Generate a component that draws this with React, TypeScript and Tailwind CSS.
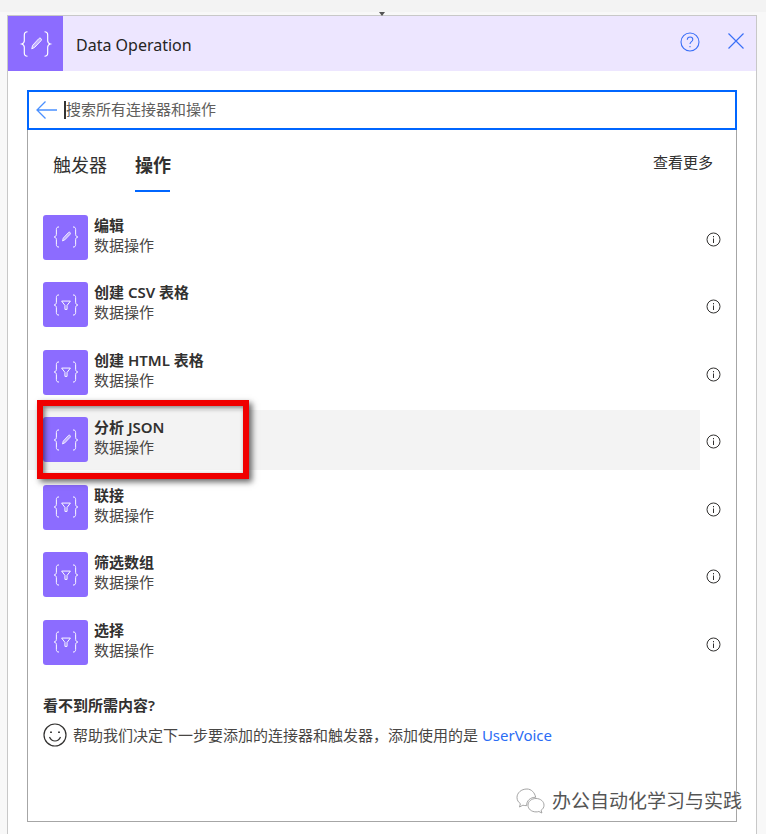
import React from 'react';

const font = "font-['Noto_Sans','Noto_Sans_CJK_SC',sans-serif]";

const Braces = ({ kind, size }: { kind: 'edit' | 'filter'; size: number }) => (
  <svg width={size} height={size} viewBox="0 0 32 32" fill="none" stroke="white" strokeWidth="1.100">
    <path d="M8 4.500c-2.200 0-3 1-3 3v5.500c0 1.500-.8 2.500-2.500 3 1.700.5 2.500 1.500 2.500 3v5.500c0 2 .8 3 3 3" />
    <path d="M24 4.500c2.200 0 3 1 3 3v5.500c0 1.500.8 2.500 2.500 3-1.700.5-2.500 1.500-2.500 3v5.500c0 2-.8 3-3 3" />
    {kind === 'edit' ? (
      <path d="M12 20.500l.8-3.200 5.800-6.300c.7-.7 1.500-.7 2.100-.1s.6 1.400-.1 2.100l-6 6.300-2.600 1.200z" fill="white" fillOpacity="0.45" strokeWidth="0.900" />
    ) : (
      <path d="M11 11.500h10l-3.800 5v4.500h-2.400v-4.500z" strokeWidth="1.100" />
    )}
  </svg>
);

const Row = ({ title, kind, active }: { title: string; kind: 'edit' | 'filter'; active?: boolean }) => (
  <div className="flex h-[60px] mb-[7.5px] items-center">
    <div className={`flex h-full w-[672px] items-center pl-[15px] ${active ? 'bg-[#f3f3f3]' : ''}`}>
      <div className="flex h-[45px] w-[45px] items-center justify-center rounded-[3px] bg-[#8c6cff]">
        <Braces kind={kind} size={28} />
      </div>
      <div className="ml-[6px] -mt-[4px]">
        <div className="text-[15px] leading-[20px] font-semibold text-[#323130]">{title}</div>
        <div className="text-[15px] leading-[21px] text-[#484644]">数据操作</div>
      </div>
    </div>
    <svg className="ml-[6px] mt-[4px]" width="15" height="15" viewBox="0 0 15 15" fill="none" stroke="#323130">
      <circle cx="7.500" cy="7.500" r="6.500" />
      <path d="M7.500 6.500v4.500M7.500 4v1.300" />
    </svg>
  </div>
);

const rows: { title: string; kind: 'edit' | 'filter'; active?: boolean }[] = [
  { title: '编辑', kind: 'edit' },
  { title: '创建 CSV 表格', kind: 'filter' },
  { title: '创建 HTML 表格', kind: 'filter' },
  { title: '分析 JSON', kind: 'edit', active: true },
  { title: '联接', kind: 'filter' },
  { title: '筛选数组', kind: 'filter' },
  { title: '选择', kind: 'filter' },
];

export default function App() {
  return (
    <div className={`relative h-[834px] w-[766px] overflow-hidden bg-[#f8f8f8] ${font}`}>
      <div className="h-[12px] bg-[#f3f3f3]" />
      <div className="ml-[7px] mt-[3px] h-[819px] w-[750px] border border-b-0 border-[#c8c8c8] bg-white">
        {/* header */}
        <div className="flex h-[55px] items-center bg-[#ede6ff]">
          <div className="flex h-[55px] w-[55px] items-center justify-center bg-[#8c6cff]">
            <Braces kind="edit" size={34} />
          </div>
          <div className="ml-[13px] mt-[2px] text-[16px] text-[#252423]">Data Operation</div>
          <svg className="ml-auto -mt-[3px]" width="20" height="20" viewBox="0 0 20 20" fill="none" stroke="#3a6ff7" strokeWidth="1.100">
            <circle cx="10" cy="10" r="9" />
            <path d="M7.300 7.800c0-1.700 1.200-2.800 2.800-2.800s2.700 1 2.700 2.400c0 2.300-2.800 2.200-2.800 4.700M10 14v1.300" />
          </svg>
          <svg className="ml-[28px] mr-[12px] -mt-[5px]" width="16" height="16" viewBox="0 0 16 16" fill="none" stroke="#3a6ff7" strokeWidth="1.200">
            <path d="M.5.500l15 15M15.500.500l-15 15" />
          </svg>
        </div>

        {/* search */}
        <div className="ml-[19px] mt-[19px] flex h-[40px] w-[710px] items-center border-2 border-[#0066ff] bg-white">
          <svg className="ml-[7px]" width="21" height="18" viewBox="0 0 21 18" fill="none" stroke="#4a90ff" strokeWidth="1.300">
            <path d="M21 9H1M9.500.500L1 9l8.500 8.500" />
          </svg>
          <div className="ml-[7px] h-[18px] w-[2px] bg-[#333]" />
          <div className="-mt-[2px] text-[15px] text-[#605e5c]">搜索所有连接器和操作</div>
        </div>

        {/* panel */}
        <div className="ml-[19px] h-[692px] w-[710px] border border-t-0 border-[#a6a6a6] bg-white">
          <div className="flex h-[77.4px] pl-[25px]">
            <div className="pt-[21px] text-[18px] leading-[28px] text-[#323130]">触发器</div>
            <div className="ml-[28px] h-[62px] w-[35px] whitespace-nowrap border-b-2 border-[#0066ff] pt-[21px] text-[18px] leading-[28px] font-bold text-[#323130]">
              操作
            </div>
            <div className="ml-auto mr-[23px] pt-[21px] text-[15px] leading-[22px] text-[#323130]">查看更多</div>
          </div>

          {rows.map((r) => (
            <Row key={r.title} {...r} />
          ))}

          <div className="ml-[15px] mt-[23px] text-[15px] leading-[20px] font-semibold text-[#323130]">看不到所需内容?</div>
          <div className="ml-[15px] mt-[8px] flex items-center">
            <svg width="24" height="24" viewBox="0 0 24 24" fill="none" stroke="#323130" strokeWidth="1.200">
              <circle cx="12" cy="12" r="11" />
              <path d="M6.500 14c1.200 2.800 3.200 4 5.500 4s4.300-1.200 5.500-4" />
              <path d="M8 8.500v1.500M16 8.500v1.500" strokeWidth="1.800" />
            </svg>
            <div className="ml-[6px] whitespace-nowrap text-[15px] text-[#484644]">
              帮助我们决定下一步要添加的连接器和触发器，添加使用的是 <span className="text-[#2a6cf5]">UserVoice</span>
            </div>
          </div>
        </div>
      </div>

      {/* small drop marker */}
      <div className="absolute left-[379px] top-[12px] h-0 w-0 border-x-[3px] border-t-[4px] border-x-transparent border-t-[#555]" />

      {/* red annotation */}
      <div className="absolute left-[37px] top-[400px] h-[79px] w-[212px] border-[6px] border-[#f00000] shadow-[3px_3px_6px_rgba(0,0,0,0.6),inset_2px_2px_5px_rgba(0,0,0,0.5)]" />

      {/* watermark */}
      <div className="absolute left-[515px] top-[787px] flex items-center">
        <svg width="32" height="28" viewBox="0 0 32 28" fill="white" stroke="#9a9a9a" strokeWidth="0.900">
          <path d="M12 2C6 2 2 6 2 10.500c0 2.600 1.300 4.700 3.400 6.200L4.500 20l3.400-1.800c1.200.3 2.500.5 3.800.4-.4-4.800 3.800-8.500 9-8.300C19.700 5.600 16.300 2 12 2z" />
          <path d="M21 11.500c-4.600 0-8 3-8 6.700s3.400 6.700 8 6.700c1 0 2-.1 2.900-.4l3 1.500-.8-2.700c1.800-1.200 2.900-3 2.900-5.100 0-3.700-3.400-6.700-8-6.700z" />
        </svg>
        <div className="ml-[5px] text-[19px] leading-[28px] text-[#555] [text-shadow:0_0_2px_white]">办公自动化学习与实践</div>
      </div>
    </div>
  );
}
